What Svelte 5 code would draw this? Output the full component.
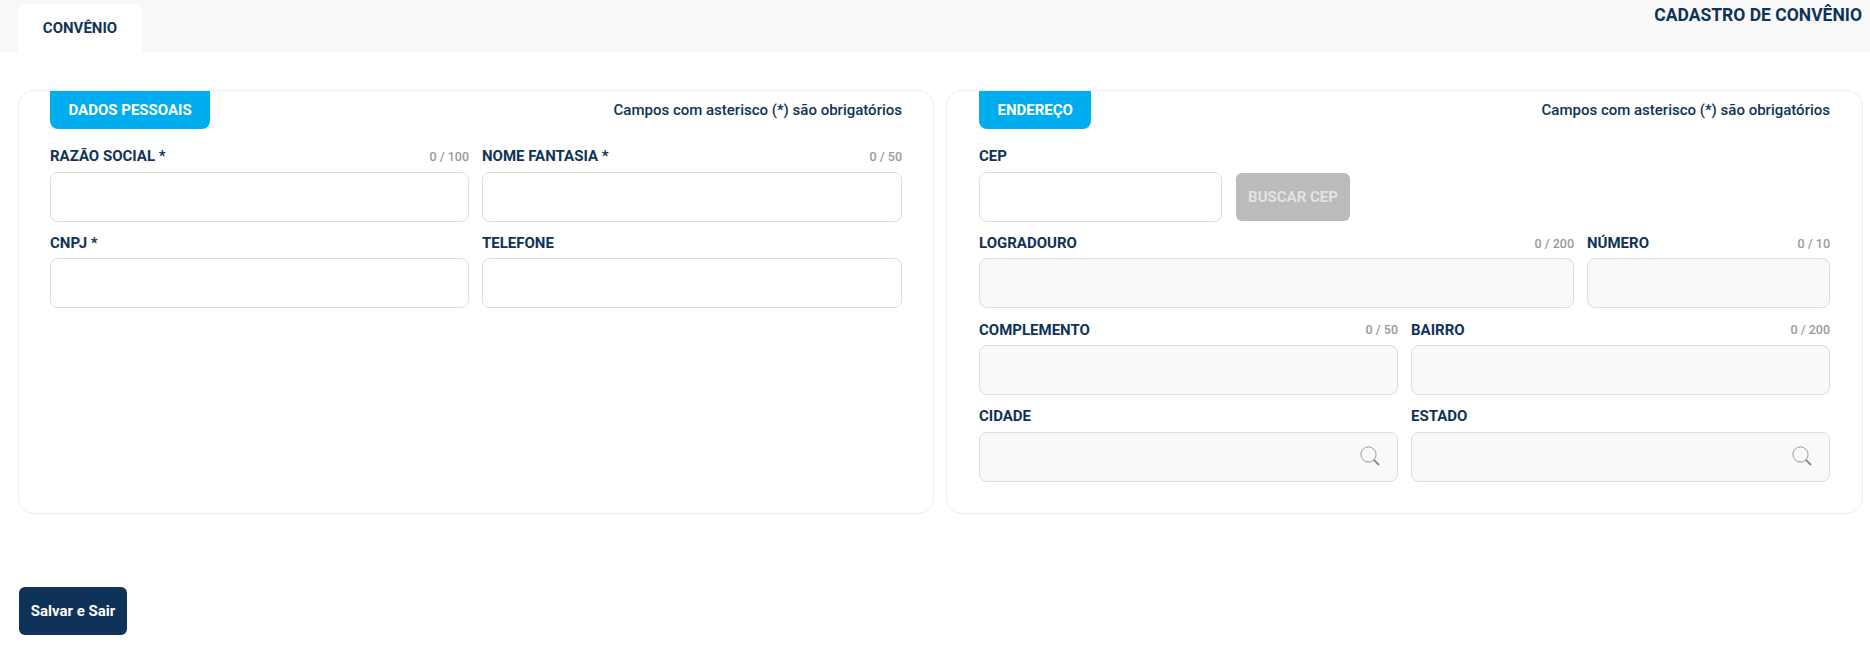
<script>
  const pessoais = [
    [
      { label: 'RAZÃO SOCIAL *', max: 100, size: 'half' },
      { label: 'NOME FANTASIA *', max: 50 }
    ],
    [{ label: 'CNPJ *', size: 'half' }, { label: 'TELEFONE' }]
  ];

  const endereco = [
    [
      { label: 'LOGRADOURO', max: 200, size: 'wide' },
      { label: 'NÚMERO', max: 10 }
    ],
    [
      { label: 'COMPLEMENTO', max: 50 },
      { label: 'BAIRRO', max: 200 }
    ],
    [
      { label: 'CIDADE', search: true },
      { label: 'ESTADO', search: true }
    ]
  ];
</script>

{#snippet field(f, disabled)}
  <div class="field {f.size ?? ''}">
    <div class="label-row">
      <label for={f.label}>{f.label}</label>
      {#if f.max}<span class="counter">0 / {f.max}</span>{/if}
    </div>
    <div class="input-wrap">
      <input id={f.label} type="text" {disabled} />
      {#if f.search}
        <svg class="search" width="20" height="20" viewBox="0 0 20 20" fill="none">
          <circle cx="8.5" cy="8.5" r="7.6" stroke="#999" stroke-width="1" />
          <path d="M14 14l5 5" stroke="#8a8a8a" stroke-width="2" />
        </svg>
      {/if}
    </div>
  </div>
{/snippet}

<div class="page">
  <header class="topbar">
    <div class="tab">CONVÊNIO</div>
    <h1>CADASTRO DE CONVÊNIO</h1>
  </header>

  <main class="panels">
    <section class="panel left">
      <div class="panel-head">
        <span class="tag">DADOS PESSOAIS</span>
        <span class="hint">Campos com asterisco (*) são obrigatórios</span>
      </div>
      <div class="rows">
        {#each pessoais as row}
          <div class="row">
            {#each row as f}
              {@render field(f, false)}
            {/each}
          </div>
        {/each}
      </div>
    </section>

    <section class="panel">
      <div class="panel-head">
        <span class="tag">ENDEREÇO</span>
        <span class="hint">Campos com asterisco (*) são obrigatórios</span>
      </div>
      <div class="rows">
        <div class="row">
          {@render field({ label: 'CEP', size: 'cep' }, false)}
          <button class="buscar" disabled>BUSCAR CEP</button>
        </div>
        {#each endereco as row}
          <div class="row">
            {#each row as f}
              {@render field(f, true)}
            {/each}
          </div>
        {/each}
      </div>
    </section>
  </main>

  <button class="salvar">Salvar e Sair</button>
</div>

<style>
  :global(body) {
    background: #fff;
  }

  .page {
    font-family: Roboto, 'Liberation Sans', sans-serif;
    color: #0f3358;
    height: 646px;
    overflow: hidden;
  }

  .topbar {
    display: flex;
    justify-content: space-between;
    height: 52px;
    padding: 0 8px 0 18px;
    background: #f9f9f9;
  }

  .tab {
    margin-top: 4px;
    width: 124px;
    height: 48px;
    line-height: 48px;
    text-align: center;
    background: #fff;
    border-radius: 8px 8px 0 0;
    font-size: 15px;
    font-weight: 700;
  }

  h1 {
    margin: 5px 0 0;
    font-size: 17.5px;
    line-height: 20px;
    font-weight: 700;
  }

  .panels {
    display: flex;
    gap: 12px;
    margin: 38px 7px 0 18px;
  }

  .panel {
    flex: 1;
    height: 424px;
    box-sizing: border-box;
    padding: 0 32px;
    border: 1px solid #eee;
    border-radius: 16px;
  }

  .panel.left {
    flex: 0 0 916px;
    padding: 0 31px;
  }

  .panel-head {
    display: flex;
    justify-content: space-between;
    align-items: center;
    height: 38px;
    margin-bottom: 16.4px;
  }

  .tag {
    height: 38px;
    line-height: 38px;
    padding: 0 18.5px;
    background: #00aeef;
    color: #fff;
    border-radius: 0 0 8px 8px;
    font-size: 15px;
    font-weight: 700;
  }

  .hint {
    font-size: 15px;
    font-weight: 500;
  }

  .rows {
    display: flex;
    flex-direction: column;
    gap: 10.4px;
  }

  .row {
    display: flex;
    gap: 13px;
    align-items: flex-end;
  }

  .field {
    flex: 1;
    min-width: 0;
  }

  .field.half {
    flex: 0 0 419px;
  }

  .field.wide {
    flex: 0 0 595px;
  }

  .field.cep {
    flex: 0 0 243px;
  }

  .label-row {
    display: flex;
    justify-content: space-between;
    align-items: center;
    height: 22px;
    margin-bottom: 4.27px;
  }

  label {
    font-size: 15px;
    font-weight: 700;
  }

  .counter {
    font-size: 12.5px;
    font-weight: 500;
    color: #999;
  }

  .input-wrap {
    position: relative;
  }

  input {
    display: block;
    width: 100%;
    height: 50px;
    box-sizing: border-box;
    border: 1px solid #ddd;
    border-radius: 8px;
    background: #fff;
  }

  input:disabled {
    background: #f9f9f9;
  }

  .search {
    position: absolute;
    top: 14px;
    right: 18px;
  }

  .buscar {
    width: 114px;
    height: 48px;
    margin: 0 0 1px 1px;
    border: none;
    border-radius: 6px;
    background: #bbb;
    color: #e2e2e2;
    font-family: inherit;
    font-size: 15px;
    font-weight: 700;
  }

  .salvar {
    display: block;
    width: 108px;
    height: 48px;
    margin: 73px 0 0 19px;
    padding: 0;
    border: none;
    border-radius: 6px;
    background: #0f3358;
    color: #fff;
    font-family: inherit;
    font-size: 15px;
    font-weight: 700;
  }
</style>
